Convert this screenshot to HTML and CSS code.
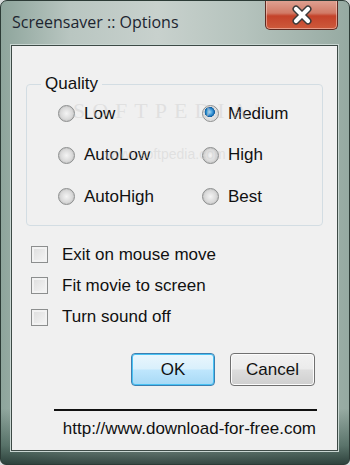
FILE: index.html
```html
<!DOCTYPE html>
<html lang="en">
<head>
    <meta charset="UTF-8">
    <title>Screensaver :: Options</title>
    <link rel="stylesheet" href="styles.css">
</head>
<body>
    <div class="window">
        <div class="titlebar">
            <span class="title">Screensaver :: Options</span>
            <div class="close">
                <svg width="28" height="20" viewBox="0 0 28 20">
                    <path d="M8 4 L20 16 M20 4 L8 16" stroke="#3a3a3a" stroke-width="7" stroke-linecap="round"/>
                    <path d="M8 4 L20 16 M20 4 L8 16" stroke="#ffffff" stroke-width="4.2" stroke-linecap="round"/>
                </svg>
            </div>
        </div>

        <div class="client">
            <fieldset class="group">
                <legend>Quality</legend>
                <div class="radios">
                    <div class="opt"><span class="radio"></span>Low</div>
                    <div class="opt"><span class="radio checked"></span>Medium</div>
                    <div class="opt"><span class="radio"></span>AutoLow</div>
                    <div class="opt"><span class="radio"></span>High</div>
                    <div class="opt"><span class="radio"></span>AutoHigh</div>
                    <div class="opt"><span class="radio"></span>Best</div>
                </div>
                <div class="watermark">SOFTPEDIA<sup>™</sup></div>
                <div class="watermark small">www.softpedia.com</div>
            </fieldset>

            <div class="checks">
                <div class="opt"><span class="check"></span>Exit on mouse move</div>
                <div class="opt"><span class="check"></span>Fit movie to screen</div>
                <div class="opt"><span class="check"></span>Turn sound off</div>
            </div>

            <div class="buttons">
                <button class="btn default">OK</button>
                <button class="btn">Cancel</button>
            </div>

            <div class="footer">
                <div class="rule"></div>
                <div class="url">http://www.download-for-free.com</div>
            </div>
        </div>
    </div>
</body>
</html>
```

FILE: styles.css
```css
body {
    margin: 0;
    background: #d8dcdc;
    font-family: "Liberation Sans", Arial, sans-serif;
}
.window {
    width: 350px;
    height: 465px;
    box-sizing: border-box;
    border: 1px solid #2c3b36;
    border-radius: 7px 7px 6px 6px;
    background:
        linear-gradient(to bottom, rgba(0,0,0,0) 88%, rgba(40,70,60,0.55) 96%, rgba(20,40,35,0.8) 100%),
        linear-gradient(to right, #8ea59c 0%, #b9c6c1 20%, #c8d1cd 45%, #b5c3bd 70%, #96aaa2 100%);
    display: flex;
    flex-direction: column;
    overflow: hidden;
}
.titlebar {
    height: 44px;
    display: flex;
    align-items: flex-start;
    justify-content: space-between;
}
.title {
    font-family: "Open Sans", "Noto Sans", sans-serif;
    font-size: 16px;
    color: #1d2530;
    margin: 10px 0 0 11px;
}
.close {
    width: 73px;
    height: 30px;
    margin: -1px 11px 0 0;
    box-sizing: border-box;
    border: 1px solid #5e2a22;
    border-top: none;
    border-radius: 0 0 5px 5px;
    background: linear-gradient(to bottom, #dfa394 0%, #d17a66 45%, #c4422a 55%, #cd5a3c 100%);
    box-shadow: inset 0 0 0 1px rgba(255,220,210,0.5);
    display: flex;
    align-items: center;
    justify-content: center;
}
.client {
    margin: 0 11px 13px 10px;
    flex: 1;
    background: #f0f0f0;
    border: 1px solid #3d4a46;
    box-shadow: 0 0 0 1px #c9d6d2;
    padding: 28px 22px 0 14px;
    display: flex;
    flex-direction: column;
    font-size: 17px;
    color: #111;
}
.group {
    position: relative;
    margin: 0;
    width: 294px;
    height: 152px;
    box-sizing: border-box;
    border: 1px solid #d3dde3;
    border-radius: 4px;
    padding: 0;
}
.group legend {
    margin-left: 14px;
    padding: 0 4px;
    font-size: 17px;
}
.radios {
    display: grid;
    grid-template-columns: 144px 120px;
    grid-auto-rows: 41.5px;
    padding: 0 0 0 31px;
    margin-top: -1px;
}
.opt {
    display: flex;
    align-items: center;
}
.radio {
    width: 15px;
    height: 15px;
    border-radius: 50%;
    border: 1px solid #8c8e8e;
    background: radial-gradient(circle at 50% 50%, #f4f4f4 0%, #d9d9d9 55%, #c8c8c8 70%, #f6f6f6 100%);
    margin-right: 9px;
    flex: none;
}
.radio.checked {
    background:
        radial-gradient(circle at 45% 40%, #9bd6f5 0%, #2a8ad0 28%, #125d9c 40%, transparent 44%),
        radial-gradient(circle at 50% 50%, #f4f4f4 0%, #dcdcdc 60%, #f6f6f6 100%);
}
.watermark {
    position: absolute;
    left: 46px;
    top: 4px;
    font-family: "Liberation Serif", serif;
    font-size: 22px;
    letter-spacing: 7px;
    color: rgba(205, 205, 205, 0.45);
    pointer-events: none;
}
.watermark sup {
    font-size: 8px;
    letter-spacing: 0;
}
.watermark.small {
    left: 78px;
    top: 52px;
    font-family: "Liberation Sans", sans-serif;
    font-size: 14px;
    letter-spacing: 0;
}
.checks {
    margin: 13px 0 0 5px;
    display: grid;
    grid-template-rows: 31px 31px 32px;
}
.check {
    width: 15px;
    height: 15px;
    border: 1px solid #8c8e8e;
    background: linear-gradient(135deg, #dcdcdc, #f6f6f6);
    box-shadow: inset 0 0 0 2px #f2f2f2;
    margin-right: 14px;
    flex: none;
}
.buttons {
    display: flex;
    justify-content: flex-end;
    gap: 15px;
    margin-top: 20px;
}
.btn {
    width: 85px;
    height: 33px;
    font-family: "Liberation Sans", Arial, sans-serif;
    font-size: 17px;
    color: #111;
    border: 1px solid #707070;
    border-radius: 4px;
    background: linear-gradient(to bottom, #f2f2f2 0%, #ebebeb 48%, #dddddd 52%, #cfcfcf 100%);
    box-shadow: inset 0 0 0 1px #fcfcfc;
    padding: 0;
}
.btn.default {
    width: 84px;
    border-color: #3c7fb1;
    background: linear-gradient(to bottom, #eaf6fd 0%, #d9f0fc 48%, #bee6fd 52%, #a7d9f5 100%);
    box-shadow: inset 0 0 0 1px #48c2f4;
}
.footer {
    margin: 23px -2px 0 28px;
}
.rule {
    height: 2px;
    background: #111;
}
.url {
    text-align: right;
    margin-top: 8px;
    padding-right: 1px;
}
```
